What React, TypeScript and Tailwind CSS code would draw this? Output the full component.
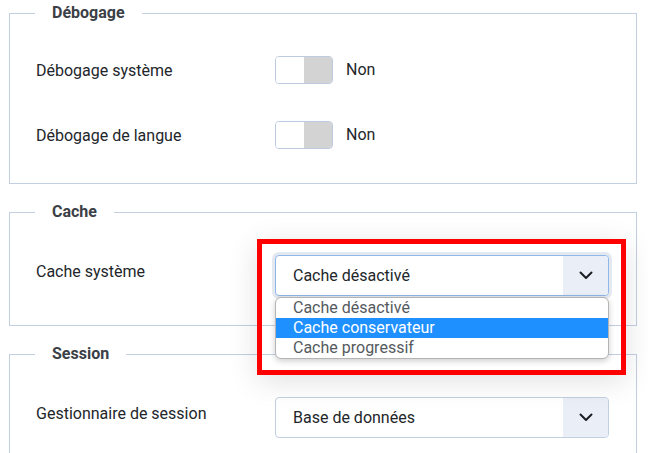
import { ReactNode } from "react";

const font = "font-['Roboto','Liberation_Sans',sans-serif]";

function Chevron() {
  return (
    <svg width="14" height="9" viewBox="0 0 14 9" fill="none">
      <path d="M1.5 1.5 7 7l5.5-5.5" stroke="#1b1f23" strokeWidth="2" strokeLinecap="round" strokeLinejoin="round" />
    </svg>
  );
}

function Toggle() {
  return (
    <div className="flex items-center gap-[13px]">
      <div className="flex h-[28px] w-[58px] overflow-hidden rounded-[4px] border border-[#bccbdf]">
        <div className="flex-1 bg-white" />
        <div className="flex-1 bg-[#d3d3d3]" />
      </div>
      <span className="text-[16px] text-[#22262a]">Non</span>
    </div>
  );
}

function Select({ value, focused, children }: { value: string; focused?: boolean; children?: ReactNode }) {
  return (
    <div className="relative w-[334px]">
      <div
        className={`flex h-[41px] items-stretch overflow-hidden rounded-[4px] border bg-white ${
          focused ? "border-[#8fb6e8] shadow-[0_0_0_3px_rgba(205,214,228,0.55)]" : "border-[#c2cfe0]"
        }`}
      >
        <div className="flex flex-1 items-center pl-[17px] text-[16px] text-[#22262a]">{value}</div>
        <div className="flex w-[45px] items-center justify-center bg-[#eaeff7]">
          <Chevron />
        </div>
      </div>
      {children}
    </div>
  );
}

function Row({ label, pad, children }: { label: string; pad: string; children: ReactNode }) {
  return (
    <div className="flex items-start">
      <div className={`w-[239px] ${pad} text-[16px] leading-6 text-[#22262a]`}>{label}</div>
      {children}
    </div>
  );
}

function Fieldset({ title, className, children }: { title: string; className?: string; children: ReactNode }) {
  return (
    <fieldset className={`border border-[#c2cfe0] px-[26px] ${className ?? ""}`}>
      <legend className="-ml-px px-[17px] text-[16px] font-bold leading-6 text-[#3b4046]">{title}</legend>
      {children}
    </fieldset>
  );
}

export default function App() {
  return (
    <div className={`relative h-[453px] w-[648px] overflow-hidden bg-white ${font}`}>
      <div className="w-[637px] pl-[9px] pt-[1px]">
        <Fieldset title="Débogage" className="pt-[31px] pb-[34px]">
          <div className="flex flex-col gap-[37px]">
            <Row label="Débogage système" pad="pt-[3px]">
              <Toggle />
            </Row>
            <Row label="Débogage de langue" pad="pt-[3px]">
              <Toggle />
            </Row>
          </div>
        </Fieldset>

        <Fieldset title="Cache" className="mt-4 pt-[31px] pb-[29px]">
          <Row label="Cache système" pad="pt-[5px]">
            <Select value="Cache désactivé" focused>
              <ul className="absolute left-0 top-full z-10 mt-[1px] w-full overflow-hidden rounded-[6px] border border-[#b4b4b4] bg-white text-[16px] leading-5 text-[#555a60] shadow-[0_2px_6px_rgba(0,0,0,0.2)]">
                <li className="h-[20px] pl-[17px]">Cache désactivé</li>
                <li className="h-[20px] bg-[#1e90ff] pl-[17px] text-white">Cache conservateur</li>
                <li className="h-[20px] pl-[17px]">Cache progressif</li>
              </ul>
            </Select>
          </Row>
        </Fieldset>

        <Fieldset title="Session" className="mt-4 pt-[31px] pb-[28px]">
          <Row label="Gestionnaire de session" pad="pt-[5px]">
            <Select value="Base de données" />
          </Row>
        </Fieldset>
      </div>

      {/* highlight frame around the open dropdown */}
      <div className="pointer-events-none absolute left-[257px] top-[239px] z-20 h-[136px] w-[369px] border-[5px] border-[#ff0000] shadow-[0_6px_28px_rgba(0,0,0,0.12)]" />
    </div>
  );
}
